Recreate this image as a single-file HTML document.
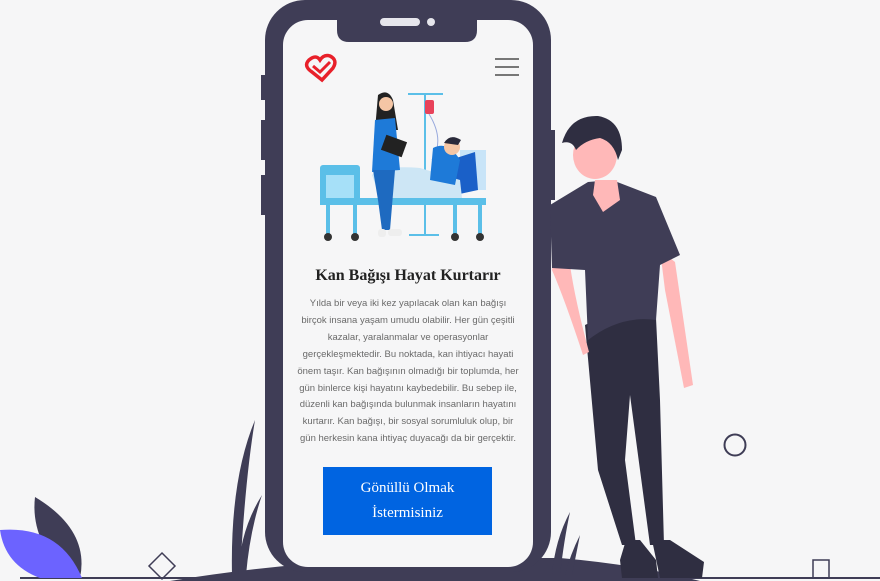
<!DOCTYPE html><html><head><meta charset="utf-8"><style>
body{margin:0;width:880px;height:581px;background:#f6f6f7;position:relative;overflow:hidden;font-family:"Liberation Sans",sans-serif}
svg{position:absolute;left:0;top:0}
.t{position:absolute;left:283px;width:250px;text-align:center}
h1{position:absolute;left:283px;width:250px;top:267px;margin:0;text-align:center;font:bold 16px "Liberation Serif",serif;color:#222}
.p{top:296px;font-size:9.5px;line-height:16.9px;color:#6a6a6a}
.btn{position:absolute;left:323px;top:467px;width:169px;height:68px;background:#0064e1;color:#fff;font:15px/25px "Liberation Serif",serif;text-align:center;display:flex;align-items:center;justify-content:center}
</style></head><body>
<svg width="880" height="581" viewBox="0 0 880 581">
<rect x="20" y="577" width="860" height="2" fill="#3f3d56"/>
<path d="M170 581 Q300 560 420 558 L560 558 Q640 565 700 581Z" fill="#3f3d56"/>
<path d="M255 420 Q230 480 232 575 L240 575 Q245 480 255 420Z" fill="#3f3d56"/>
<path d="M262 495 Q240 530 238 575 L246 575 Q250 530 262 495Z" fill="#3f3d56"/>
<path d="M570 512 Q555 540 552 575 L560 575 Q564 540 570 512Z" fill="#3f3d56"/>
<path d="M580 535 Q570 555 565 575 L572 575Z" fill="#3f3d56"/>
<path d="M35 497 Q90 530 80 578 L68 578 Q30 540 35 497Z" fill="#3f3d56"/>
<path d="M0 530 Q60 525 82 578 L40 578 Q5 565 0 530Z" fill="#6c63ff"/>
<path d="M162 553 L175 566 L162 579 L149 566Z" fill="none" stroke="#3f3d56" stroke-width="1.5"/>
<circle cx="735" cy="445" r="10.5" fill="none" stroke="#3f3d56" stroke-width="2"/>
<rect x="813" y="560" width="16" height="18" fill="none" stroke="#3f3d56" stroke-width="1.5"/>
<rect x="261" y="75" width="8" height="25" fill="#3f3d56"/>
<rect x="261" y="120" width="8" height="40" fill="#3f3d56"/>
<rect x="261" y="175" width="8" height="40" fill="#3f3d56"/>
<rect x="545" y="130" width="10" height="70" fill="#3f3d56"/>
<rect x="265" y="0" width="286" height="572" rx="40" fill="#3f3d56"/>
<rect x="283" y="20" width="250" height="547" rx="25" fill="#f6f6f7"/>
<path d="M337 14 L477 14 L477 30 Q477 42 465 42 L349 42 Q337 42 337 30Z" fill="#3f3d56"/>
<rect x="380" y="18" width="40" height="8" rx="4" fill="#e6e6ec"/>
<circle cx="431" cy="22" r="4" fill="#e6e6ec"/>
<path d="M309 60 Q303 66 312 72 L322 80 L333 68 Q338 60 330 56 Q324 54 320 60 Q316 54 309 60Z" fill="none" stroke="#e8202a" stroke-width="3.5"/>
<path d="M313 66 L320 72 L330 62" fill="none" stroke="#e8202a" stroke-width="3"/>
<rect x="495" y="58" width="24" height="2" fill="#777"/>
<rect x="495" y="66" width="24" height="2" fill="#777"/>
<rect x="495" y="74" width="24" height="2" fill="#777"/>
<rect x="408" y="93" width="35" height="2" fill="#5bbfe8"/>
<rect x="424" y="93" width="2" height="143" fill="#5bbfe8"/>
<rect x="425" y="100" width="9" height="14" rx="2" fill="#e8425a"/>
<path d="M429 114 Q445 140 432 160" stroke="#9ad" fill="none"/>
<rect x="320" y="165" width="40" height="38" rx="3" fill="#5bbfe8"/>
<rect x="326" y="175" width="28" height="25" fill="#a6e0f8"/>
<rect x="460" y="150" width="26" height="40" fill="#c8e4f8"/>
<path d="M450 160 L475 152 L478 190 L455 195Z" fill="#1a60c8"/>
<rect x="320" y="198" width="166" height="7" fill="#5bbfe8"/>
<path d="M372 175 Q380 165 420 168 L460 180 L462 198 L380 198Z" fill="#cde6f5"/>
<path d="M433 148 Q448 140 460 160 L455 185 L430 180Z" fill="#1e7ad8"/>
<circle cx="452" cy="147" r="8" fill="#f5c6a5"/>
<path d="M444 143 Q450 133 461 140 L458 145 Z" fill="#2a2a3a"/>
<rect x="326" y="205" width="4" height="30" fill="#5bbfe8"/>
<rect x="353" y="205" width="4" height="30" fill="#5bbfe8"/>
<rect x="453" y="205" width="4" height="30" fill="#5bbfe8"/>
<rect x="478" y="205" width="4" height="30" fill="#5bbfe8"/>
<circle cx="328" cy="237" r="4" fill="#333"/><circle cx="355" cy="237" r="4" fill="#333"/>
<circle cx="455" cy="237" r="4" fill="#333"/><circle cx="480" cy="237" r="4" fill="#333"/>
<rect x="409" y="234" width="30" height="2" fill="#5bbfe8"/>
<path d="M378 95 Q388 88 393 100 L398 130 L375 130Z" fill="#222"/>
<circle cx="386" cy="104" r="7" fill="#f5c6a5"/>
<path d="M375 120 L395 118 L400 170 L372 172Z" fill="#1e7ad8"/>
<path d="M373 170 L395 170 L390 230 L382 230 L378 200Z" fill="#1e6ac0"/>
<rect x="383" y="138" width="22" height="16" fill="#222" transform="rotate(20 394 146)"/>
<rect x="378" y="229" width="8" height="8" rx="3" fill="#eee"/><rect x="388" y="229" width="14" height="7" rx="3" fill="#eee"/>
<path d="M600 318 L585 325 L598 470 L622 545 L636 545 L625 460 L630 395 L650 545 L664 545 L660 400 L656 318Z" fill="#2f2e41"/>
<path d="M626 540 L620 560 L622 578 L658 578 L656 560 L640 540Z" fill="#2f2e41"/>
<path d="M652 540 L660 578 L702 578 L704 562 L670 540Z" fill="#2f2e41"/>
<path d="M560 200 L552 270 Q565 300 583 355 L589 352 Q575 300 570 265Z" fill="#ffb8b8"/>
<path d="M660 250 L675 262 L693 385 L684 388 L665 290Z" fill="#ffb8b8"/>
<path d="M550 205 L588 182 L612 180 L656 197 L680 255 L660 265 L656 320 Q620 315 588 340 L585 270 L552 268Z" fill="#3f3d56"/>
<path d="M593 195 L603 212 L620 200 L617 180 L595 180Z" fill="#ffb8b8"/>
<ellipse cx="595" cy="155" rx="22" ry="24" fill="#ffb8b8"/>
<path d="M562 143 Q570 115 598 116 Q622 120 622 150 L618 160 Q614 142 600 138 Q585 140 576 150 Q572 140 562 143Z" fill="#2f2e41"/>
</svg>
<h1>Kan Bağışı Hayat Kurtarır</h1>
<div class="t p">Yılda bir veya iki kez yapılacak olan kan bağışı<br>birçok insana yaşam umudu olabilir. Her gün çeşitli<br>kazalar, yaralanmalar ve operasyonlar<br>gerçekleşmektedir. Bu noktada, kan ihtiyacı hayati<br>önem taşır. Kan bağışının olmadığı bir toplumda, her<br>gün binlerce kişi hayatını kaybedebilir. Bu sebep ile,<br>düzenli kan bağışında bulunmak insanların hayatını<br>kurtarır. Kan bağışı, bir sosyal sorumluluk olup, bir<br>gün herkesin kana ihtiyaç duyacağı da bir gerçektir.</div>
<div class="btn">Gönüllü Olmak<br>İstermisiniz</div>
</body></html>
